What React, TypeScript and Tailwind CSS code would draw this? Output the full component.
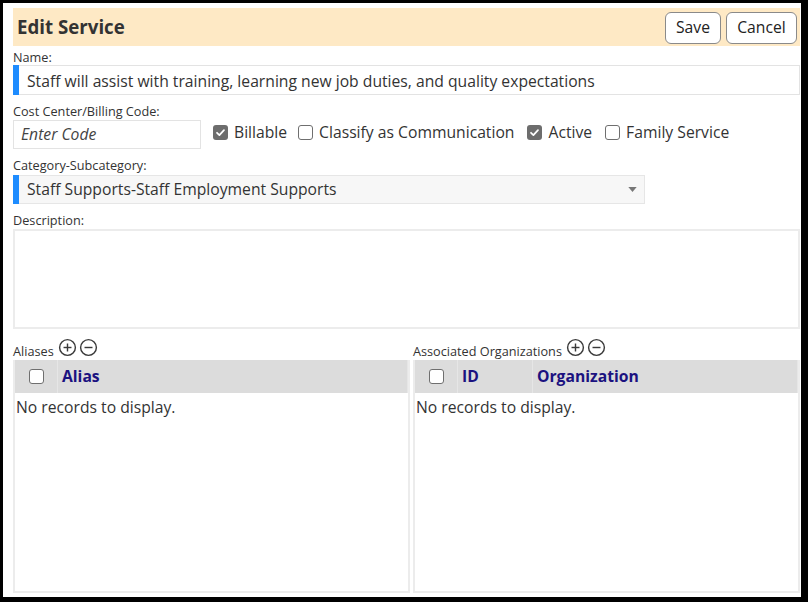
import React from "react";

const font = { fontFamily: '"Open Sans", "Noto Sans", sans-serif' };

const Check: React.FC<{ checked?: boolean }> = ({ checked }) =>
    checked ? (
        <span className="inline-flex items-center justify-center w-[15px] h-[15px] rounded-[3px] bg-[#6d6d6d]">
            <svg viewBox="0 0 12 12" className="w-[11px] h-[11px]">
                <path d="M2.2 6.3 L4.8 8.8 L9.8 3.4" fill="none" stroke="white" strokeWidth="1.9" strokeLinecap="round" strokeLinejoin="round" />
            </svg>
        </span>
    ) : (
        <span className="inline-block w-[15px] h-[15px] rounded-[3px] border border-[#6f6f6f] bg-white" />
    );

const CircleIcon: React.FC<{ plus?: boolean }> = ({ plus }) => (
    <svg viewBox="0 0 20 20" className="w-[19px] h-[19px]">
        <circle cx="10" cy="10" r="8.3" fill="none" stroke="#3a3a3a" strokeWidth="1.5" />
        <path d="M5.8 10 H14.2" stroke="#3a3a3a" strokeWidth="1.5" />
        {plus && <path d="M10 5.8 V14.2" stroke="#3a3a3a" strokeWidth="1.5" />}
    </svg>
);

const Label: React.FC<{ children: React.ReactNode }> = ({ children }) => (
    <div className="text-[12.7px] leading-[14px] text-[#333]">{children}</div>
);

const Grid: React.FC<{ cols: { title: string; width?: string }[] }> = ({ cols }) => (
    <div className="flex-1 flex flex-col border-2 border-[#ececec] border-t-0">
        <div className="flex h-[33px] bg-[#dcdcdc] items-center">
            <div className="w-[43px] h-full flex items-center justify-center border-r border-[#e6e6e6]">
                <Check />
            </div>
            {cols.map((c) => (
                <div
                    key={c.title}
                    className={`h-full flex items-center pl-[4px] text-[15.7px] font-bold text-[#1b1280] border-r border-[#e6e6e6] ${c.width ?? "flex-1"}`}
                >
                    {c.title}
                </div>
            ))}
        </div>
        <div className="pt-[3px] pl-[1px] text-[15.7px] leading-[22px] text-[#333]">No records to display.</div>
    </div>
);

export default function App() {
    return (
        <div className="w-[808px] h-[602px] bg-black pl-[3px] pt-[3px] pr-[7px] pb-[5px]" style={font}>
            <div className="w-full h-full bg-white pl-[10px] pr-[1px] pt-[5px] flex flex-col">
                {/* header */}
                <div className="h-[38px] bg-[#fee9c5] flex items-center justify-between pl-[4px] pr-[3px]">
                    <h1 className="text-[18.7px] leading-[24px] font-bold text-[#333]">Edit Service</h1>
                    <div className="flex gap-[5px] mt-[2px]">
                        <button className="w-[56px] h-[32px] rounded-[6px] border border-[#8a8a8a] bg-white text-[15.7px] text-[#222]">Save</button>
                        <button className="w-[71px] h-[32px] rounded-[6px] border border-[#8a8a8a] bg-white text-[15.7px] text-[#222]">Cancel</button>
                    </div>
                </div>

                <div className="mt-[4px]"><Label>Name:</Label></div>
                <div className="mt-[1px] h-[30px] flex border border-[#e3e3e3]">
                    <div className="w-[6px] bg-[#1e8cff] -ml-px -my-px" />
                    <div className="pl-[8px] pt-[3px] flex items-center text-[15.7px] text-[#333]">
                        Staff will assist with training, learning new job duties, and quality expectations
                    </div>
                </div>

                <div className="mt-[9px]"><Label>Cost Center/Billing Code:</Label></div>
                <div className="mt-[2px] flex items-center">
                    <div className="w-[188px] h-[29px] border border-[#e3e3e3] flex items-center pl-[7px] pt-[1px] italic text-[15.7px] text-[#444]">
                        Enter Code
                    </div>
                    <div className="flex items-center ml-[12px] -mt-[3px] text-[15.7px] text-[#333]">
                        <Check checked />
                        <span className="ml-[6px]">Billable</span>
                        <span className="ml-[11px] flex"><Check /></span>
                        <span className="ml-[6px]">Classify as Communication</span>
                        <span className="ml-[13px] flex"><Check checked /></span>
                        <span className="ml-[6px]">Active</span>
                        <span className="ml-[13px] flex"><Check /></span>
                        <span className="ml-[6px]">Family Service</span>
                    </div>
                </div>

                <div className="mt-[9px]"><Label>Category-Subcategory:</Label></div>
                <div className="mt-[3px] w-[632px] h-[29px] flex border border-[#e6e6e6] bg-[#f7f7f7]">
                    <div className="w-[6px] bg-[#1e8cff] -ml-px -my-px" />
                    <div className="flex-1 pl-[8px] pt-[1px] flex items-center text-[15.7px] text-[#333]">
                        Staff Supports-Staff Employment Supports
                    </div>
                    <div className="w-[24px] flex items-center justify-center">
                        <svg viewBox="0 0 10 6" className="w-[9px] h-[5px]">
                            <path d="M0 0 H10 L5 6 Z" fill="#777" />
                        </svg>
                    </div>
                </div>

                <div className="mt-[9px]"><Label>Description:</Label></div>
                <div className="mt-[2px] h-[100px] border-2 border-[#ececec]" />

                {/* grids */}
                <div className="flex-1 flex gap-[3px] pb-[4px]">
                    <div className="w-[397px] flex flex-col">
                        <div className="flex items-end h-[31px]">
                            <span className="text-[12.7px] leading-[14px] text-[#333] mb-[2px]">Aliases</span>
                            <span className="flex gap-[2px] ml-[4px] mb-[3px]"><CircleIcon plus /><CircleIcon /></span>
                        </div>
                        <Grid cols={[{ title: "Alias" }]} />
                    </div>
                    <div className="flex-1 flex flex-col">
                        <div className="flex items-end h-[31px]">
                            <span className="text-[12.7px] leading-[14px] text-[#333] mb-[2px]">Associated Organizations</span>
                            <span className="flex gap-[2px] ml-[4px] mb-[3px]"><CircleIcon plus /><CircleIcon /></span>
                        </div>
                        <Grid cols={[{ title: "ID", width: "w-[75px]" }, { title: "Organization" }]} />
                    </div>
                </div>
            </div>
        </div>
    );
}
